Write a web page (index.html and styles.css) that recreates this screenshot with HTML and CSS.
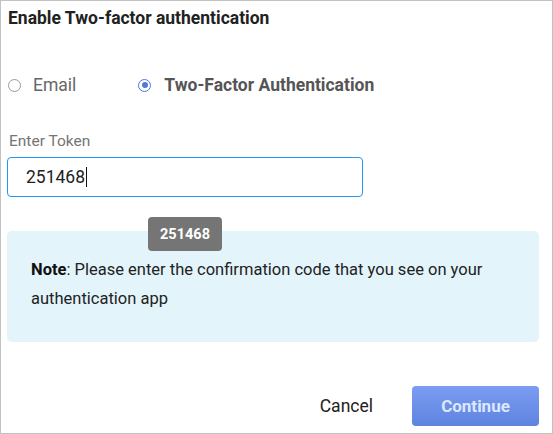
FILE: index.html
```html
<!DOCTYPE html>
<html>
<head>
<meta charset="utf-8">
<link rel="stylesheet" href="styles.css">
</head>
<body>
<div class="dialog">
  <h1 class="title">Enable Two-factor authentication</h1>
  <div class="radios">
    <label class="radio">
      <span class="dot"></span>
      <span class="radio-text">Email</span>
    </label>
    <label class="radio radio-checked">
      <span class="dot"></span>
      <span class="radio-text">Two-Factor Authentication</span>
    </label>
  </div>
  <div class="field">
    <div class="field-label">Enter Token</div>
    <div class="input"><span class="value">251468</span><span class="caret"></span></div>
  </div>
  <div class="note-wrap">
    <div class="tooltip">251468</div>
    <div class="note"><b>Note</b>: Please enter the confirmation code that you see on your authentication app</div>
  </div>
  <div class="actions">
    <button class="btn-cancel">Cancel</button>
    <button class="btn-continue">Continue</button>
  </div>
</div>
</body>
</html>
```
FILE: styles.css
```css
* { box-sizing: border-box; }
html, body { margin: 0; padding: 0; background: #fff; }
body { font-family: Roboto, "Liberation Sans", sans-serif; color: #222; }
.dialog {
  width: 553px;
  height: 434px;
  border: 1px solid #c2c2c2;
  padding: 0 13px 0 6px;
  display: flex;
  flex-direction: column;
}
.title {
  margin: 0;
  padding: 7px 0 0 1px;
  font-size: 17.5px;
  font-weight: 700;
  line-height: 20px;
  color: #212121;
}
.radios {
  display: flex;
  align-items: center;
  margin-top: 45px;
  height: 24px;
  padding-left: 1px;
}
.radio {
  display: flex;
  align-items: center;
  font-size: 17.5px;
  color: #666;
}
.radio + .radio { margin-left: 62px; }
.dot {
  width: 13px;
  height: 13px;
  border: 1px solid #9a9a9a;
  border-radius: 50%;
  margin-right: 12px;
  position: relative;
}
.radio-checked .dot { border-color: #4f78e0; margin-right: 13px; }
.radio-checked .dot::after {
  content: "";
  position: absolute;
  left: 2.5px; top: 2.5px;
  width: 6px; height: 6px;
  border-radius: 50%;
  background: #4f78e0;
}
.radio-checked .radio-text { font-weight: 700; color: #555; }
.field { margin-top: 35px; }
.field-label {
  font-size: 15.5px;
  color: #757575;
  line-height: 18px;
  padding-left: 2px;
}
.input {
  margin-top: 7px;
  width: 356px;
  height: 40px;
  border: 1.5px solid #2196f3;
  border-radius: 4px;
  display: flex;
  align-items: center;
  padding-left: 18px;
  font-size: 17.5px;
  color: #222;
}
.caret {
  display: inline-block;
  width: 1px;
  height: 20px;
  background: #111;
  margin-left: 1px;
}
.note-wrap { position: relative; margin-top: 34px; }
.tooltip {
  position: absolute;
  left: 141px;
  top: -14px;
  width: 74px;
  height: 34px;
  background: #757575;
  color: #fff;
  font-size: 14.5px;
  font-weight: 700;
  border-radius: 4px;
  display: flex;
  align-items: center;
  justify-content: center;
  z-index: 2;
}
.note {
  width: 532px;
  height: 111px;
  background: #e3f4fb;
  border-radius: 5px;
  padding: 24px 24px 0 24px;
  font-size: 16.5px;
  line-height: 29px;
  color: #222;
}
.note b { font-weight: 700; color: #111; }
.actions {
  margin-top: 44px;
  display: flex;
  justify-content: flex-end;
  align-items: center;
}
.btn-cancel {
  background: none;
  border: none;
  font-family: inherit;
  font-size: 17.5px;
  color: #222;
  padding: 0;
  margin-right: 39px;
}
.btn-continue {
  width: 127px;
  height: 40px;
  border: none;
  border-radius: 4px;
  background: linear-gradient(#7b9cf1, #5f84e0);
  color: #dce8ff;
  font-family: inherit;
  font-size: 17px;
  font-weight: 700;
}
```
